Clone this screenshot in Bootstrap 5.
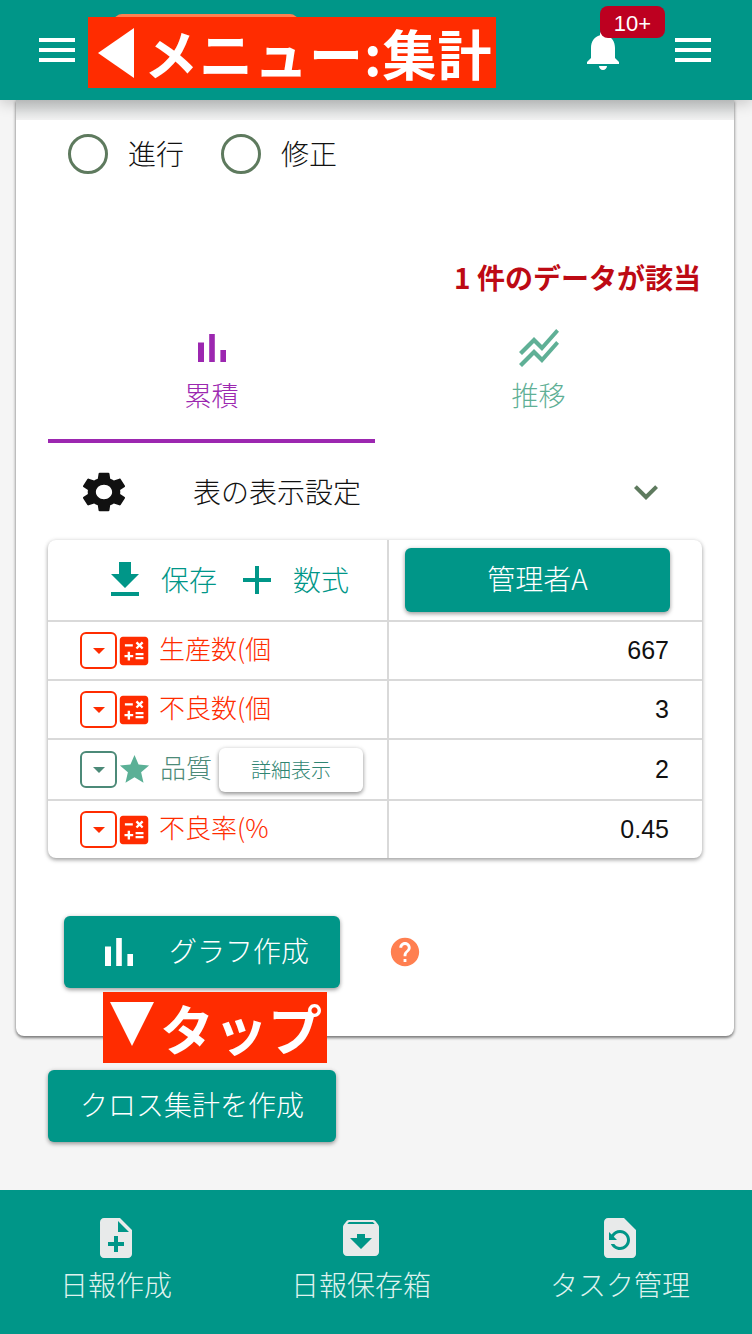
<!DOCTYPE html>
<html lang="ja">
<head>
    <meta charset="UTF-8">
    <meta name="viewport" content="width=device-width, initial-scale=1.0">
    <title>集計</title>
    <link rel="stylesheet" href="https://cdn.jsdelivr.net/npm/bootstrap@5.3.0/dist/css/bootstrap.min.css">
    <style>
        html, body { height: 100%; }
        body {
            width: 752px; height: 1334px; overflow: hidden; position: relative;
            background: #f5f5f5; color: #111;
            font-family: "Noto Sans CJK JP", "Liberation Sans", sans-serif;
            font-size: 28px; font-weight: 300; line-height: 1.2;
        }
        svg { fill: currentColor; flex: none; display: block; }
        .top-bar {
            height: 100px; padding: 0 35px 0 33px; background: #009688; color: #fff;
            position: relative; z-index: 2;
            box-shadow: 0 3px 14px rgba(0,0,0,.2);
        }
        .bell-wrap { position: relative; margin-right: 42px; }
        .bell-badge {
            position: absolute; left: 21px; top: -20px; width: 65px; height: 32px;
            background: #bd0020; border-radius: 8px; color: #fff;
            font: 22px/35px "Liberation Sans", sans-serif; text-align: center;
        }
        .orange-tab {
            position: absolute; left: 114px; top: 14px; width: 184px; height: 10px; z-index: 3;
            background: #ff7f50; border-radius: 8px 8px 0 0;
        }
        .red-label {
            position: absolute; z-index: 4; height: 71px; background: #ff2c00; color: #fff;
            font-size: 54px; font-weight: 700; line-height: 66px; white-space: nowrap;
        }
        .label-menu { left: 88px; top: 17px; width: 408px; padding-left: 10px; }
        .label-menu b { font-weight: 700; margin-left: 10px; letter-spacing: 1px; }
        .label-tap { left: 103px; top: 992px; width: 224px; padding-left: 7px; }
        .label-tap b { font-weight: 700; margin-left: 6px; }
        .tri-left { border-style: solid; border-color: transparent #fff transparent transparent; border-width: 25px 36px 25px 0; flex: none; }
        .tri-down { border-style: solid; border-color: #fff transparent transparent transparent; border-width: 44px 22px 0 22px; flex: none; margin-top: -8px; }

        .main-card {
            margin: 0 18px 0 16px; height: 936px; background: #fff; border-radius: 0 0 8px 8px;
            box-shadow: 0 2px 3px rgba(0,0,0,.45), 0 0 4px rgba(0,0,0,.2);
        }
        .top-fade { height: 20px; background: linear-gradient(#d2d5d5, #d9dbdb 40%, #f1f1f1); }
        .radio-row { padding: 14px 0 0 52px; height: 134px; }
        .radio-row .form-check-input {
            width: 40px; height: 40px; margin: 0 20px 0 0; float: none; border: 3px solid #5e7a5e; flex: none;
        }
        .radio-row label { margin-right: 37px; }
        .hit-count { padding-right: 33px; height: 50px; color: #bd0a14; font-size: 28px; font-weight: 700; text-align: right; line-height: 46px; }
        .mode-tabs { margin: 20px 32px 0; height: 119px; }
        .mode-tab { width: 327px; height: 119px; color: #5fb096; }
        .mode-tab.active-tab { color: #9c27b0; border-bottom: 4px solid #9c27b0; }
        .mode-tab span { margin-top: 7px; font-size: 27px; }
        .setting-row { height: 97px; padding: 0 64px 0 67px; }
        .setting-row .setting-text { margin-left: 68px; flex-grow: 1; }
        .chevron { color: #5e7a5e; }
        .sum-box {
            margin: 0 32px; border-radius: 8px; background: #fff;
            box-shadow: 0 2px 4px rgba(0,0,0,.35), 0 0 5px rgba(0,0,0,.08);
        }
        .sum-table { margin: 0; width: 654px; table-layout: fixed; border-collapse: collapse; --bs-table-bg: transparent; }
        .sum-table td { padding: 0; border: 0; vertical-align: middle; }
        .sum-table tr + tr td { border-top: 2px solid #d9d9d9; }
        .sum-table td:first-child { width: 340px; border-right: 2px solid #d9d9d9; }
        .tr-head { height: 81px; }
        .tr-row { height: 59px; }
        .tr-high { height: 61px; }
        .tr-last { height: 58px; }
        .head-tools { color: #009688; padding-left: 53px; }
        .head-tools span { margin: 0 16px 0 12px; }
        .admin-btn { display: block; width: 265px; height: 64px; margin-left: 16px; padding: 0 0 4px; font-size: 28px; line-height: 1; }
        .teal-btn {
            background: #009688; color: #fff; border: 0; border-radius: 6px; font-weight: 300;
            box-shadow: 0 2px 4px rgba(0,0,0,.35), 0 0 5px rgba(0,0,0,.08);
        }
        .teal-btn:hover { background: #009688; color: #fff; }
        .row-head { padding-left: 32px; color: #ff2c00; font-size: 26px; }
        .row-head span { padding-bottom: 5px; }
        .row-head.star-row { color: #4c8a78; }
        .drop-box {
            width: 37px; height: 37px; border: 2px solid currentColor; border-radius: 6px; flex: none;
            display: flex; align-items: center; justify-content: center;
        }
        .drop-box i { border: 6px solid transparent; border-top-color: currentColor; border-bottom: 0; }
        .row-head svg { margin-left: -2px; margin-right: 6px; }
        .star-row svg { color: #5bb096; margin-left: 0; margin-right: 8px; }
        .row-value { padding-right: 33px !important; text-align: right; font: 25px "Liberation Sans", sans-serif; color: #111; }
        .detail-btn {
            width: 144px; height: 44px; margin-left: 7px; padding: 0; background: #fff; border: 0; border-radius: 6px;
            color: #2f8572; font-size: 20px; font-weight: 300;
            box-shadow: 0 2px 4px rgba(0,0,0,.4), 0 0 5px rgba(0,0,0,.08);
        }
        .graph-row { margin: 58px 0 0 48px; }
        .graph-btn { width: 276px; height: 72px; padding: 0 0 0 31px; font-size: 28px; }
        .graph-btn span { margin-left: 26px; padding-bottom: 4px; }
        .help-icon { color: #ff7f50; margin-left: 48px; }
        .cross-btn { display: block; width: 288px; height: 72px; margin: 34px 0 0 48px; padding: 0 0 4px; font-size: 28px; }
        .bottom-bar {
            position: absolute; left: 0; right: 0; top: 1190px; height: 144px; padding: 24px 62px 0 60px;
            background: #009688; color: #dff2ee;
        }
        .bottom-item svg { color: #e8eaea; }
        .bottom-item span { margin-top: 6px; }
    </style>
</head>
<body>

<!-- header -->
<div class="top-bar d-flex align-items-center justify-content-between">
    <svg width="48" height="48" viewBox="0 0 24 24"><path d="M3 18h18v-2H3v2zm0-5h18v-2H3v2zm0-7v2h18V6H3z"/></svg>
    <div class="d-flex align-items-center">
        <div class="bell-wrap">
            <svg width="48" height="48" viewBox="0 0 24 24"><path d="M12 22c1.1 0 2-.9 2-2h-4c0 1.1.89 2 2 2zm6-6v-5c0-3.07-1.64-5.64-4.5-6.32V4c0-.83-.67-1.5-1.5-1.5s-1.5.67-1.5 1.5v.68C7.63 5.36 6 7.92 6 11v5l-2 2v1h16v-1l-2-2z"/></svg>
            <div class="bell-badge">10+</div>
        </div>
        <svg width="48" height="48" viewBox="0 0 24 24"><path d="M3 18h18v-2H3v2zm0-5h18v-2H3v2zm0-7v2h18V6H3z"/></svg>
    </div>
</div>
<div class="orange-tab"></div>
<div class="red-label label-menu d-flex align-items-center"><i class="tri-left"></i><b>メニュー:集計</b></div>

<!-- main card -->
<div class="main-card">
    <div class="top-fade"></div>

    <div class="radio-row d-flex align-items-start">
        <label class="d-flex align-items-center"><input class="form-check-input" type="radio" name="mode">進行</label>
        <label class="d-flex align-items-center"><input class="form-check-input" type="radio" name="mode">修正</label>
    </div>

    <div class="hit-count">1 件のデータが該当</div>

    <div class="mode-tabs d-flex">
        <div class="mode-tab active-tab d-flex flex-column align-items-center">
            <svg width="48" height="48" viewBox="0 0 24 24"><path d="M5 9.2h3V19H5zM10.6 5h2.8v14h-2.8zm5.6 8H19v6h-2.8z"/></svg>
            <span>累積</span>
        </div>
        <div class="mode-tab d-flex flex-column align-items-center">
            <svg width="48" height="48" viewBox="0 0 24 24"><path d="M2 19.99l7.5-7.51 4 4 7.09-7.97L22 9.92l-8.5 9.56-4-4-6 6.01-1.5-1.5zm1.5-4.5l6-6.01 4 4L22 3.92l-1.41-1.41-7.09 7.97-4-4L2 13.99l1.5 1.5z"/></svg>
            <span>推移</span>
        </div>
    </div>

    <div class="setting-row d-flex align-items-center">
        <svg width="42" height="40" viewBox="2.7 2 18.6 20" preserveAspectRatio="none"><path d="M19.14 12.94c.04-.3.06-.61.06-.94 0-.32-.02-.64-.07-.94l2.03-1.58c.18-.14.23-.41.12-.61l-1.92-3.32c-.12-.22-.37-.29-.59-.22l-2.39.96c-.5-.38-1.03-.7-1.62-.94l-.36-2.54c-.04-.24-.24-.41-.48-.41h-3.84c-.24 0-.43.17-.47.41l-.36 2.54c-.59.24-1.13.57-1.62.94l-2.39-.96c-.22-.08-.47 0-.59.22L2.74 8.87c-.12.21-.08.47.12.61l2.03 1.58c-.05.3-.09.63-.09.94s.02.64.07.94l-2.03 1.58c-.18.14-.23.41-.12.61l1.92 3.32c.12.22.37.29.59.22l2.39-.96c.5.38 1.03.7 1.62.94l.36 2.54c.05.24.24.41.48.41h3.84c.24 0 .44-.17.47-.41l.36-2.54c.59-.24 1.13-.56 1.62-.94l2.39.96c.22.08.47 0 .59-.22l1.92-3.32c.12-.22.07-.47-.12-.61l-2.01-1.58zM12 15.6c-1.98 0-3.6-1.62-3.6-3.6s1.62-3.6 3.6-3.6 3.6 1.62 3.6 3.6-1.62 3.6-3.6 3.6z"/></svg>
        <div class="setting-text">表の表示設定</div>
        <svg class="chevron" width="48" height="48" viewBox="0 0 24 24"><path d="M16.59 8.59L12 13.17 7.41 8.59 6 10l6 6 6-6z"/></svg>
    </div>

    <div class="sum-box">
        <table class="table sum-table">
            <tbody id="sum-body">
                <tr class="tr-head">
                    <td>
                        <div class="head-tools d-flex align-items-center">
                            <svg width="48" height="48" viewBox="0 0 24 24"><path d="M19 9h-4V3H9v6H5l7 7 7-7zM5 18v2h14v-2H5z"/></svg>
                            <span>保存</span>
                            <svg width="48" height="48" viewBox="0 0 24 24"><path d="M19 13h-6v6h-2v-6H5v-2h6V5h2v6h6v2z"/></svg>
                            <span>数式</span>
                        </div>
                    </td>
                    <td><button class="btn teal-btn admin-btn" type="button">管理者A</button></td>
                </tr>
            </tbody>
        </table>
    </div>

    <div class="graph-row d-flex align-items-center">
        <button class="btn teal-btn graph-btn d-flex align-items-center" type="button">
            <svg width="48" height="48" viewBox="0 0 24 24"><path d="M5 9.2h3V19H5zM10.6 5h2.8v14h-2.8zm5.6 8H19v6h-2.8z"/></svg>
            <span>グラフ作成</span>
        </button>
        <svg class="help-icon" width="34" height="34" viewBox="0 0 24 24"><path d="M12 2C6.48 2 2 6.48 2 12s4.48 10 10 10 10-4.48 10-10S17.52 2 12 2zm1 17h-2v-2h2v2zm2.07-7.75l-.9.92C13.45 12.9 13 13.5 13 15h-2v-.5c0-1.1.45-2.1 1.17-2.83l1.24-1.26c.37-.36.59-.86.59-1.41 0-1.1-.9-2-2-2s-2 .9-2 2H8c0-2.21 1.79-4 4-4s4 1.79 4 4c0 .88-.36 1.68-.93 2.25z"/></svg>
    </div>
</div>

<div class="red-label label-tap d-flex align-items-center"><i class="tri-down"></i><b>タップ</b></div>

<button class="btn teal-btn cross-btn" type="button">クロス集計を作成</button>

<!-- bottom nav -->
<div class="bottom-bar d-flex justify-content-between align-items-start">
    <div class="bottom-item d-flex flex-column align-items-center">
        <svg width="48" height="48" viewBox="0 0 24 24"><path d="M14 2H6c-1.1 0-1.99.9-1.99 2L4 20c0 1.1.89 2 1.99 2H18c1.1 0 2-.9 2-2V8l-6-6zm2 14h-3v3h-2v-3H8v-2h3v-3h2v3h3v2zm-3-7V3.5L18.5 9H13z"/></svg>
        <span>日報作成</span>
    </div>
    <div class="bottom-item d-flex flex-column align-items-center">
        <svg width="48" height="48" viewBox="0 0 24 24"><path d="M20.54 5.23l-1.39-1.68C18.88 3.21 18.47 3 18 3H6c-.47 0-.88.21-1.16.55L3.46 5.23C3.17 5.57 3 6.02 3 6.5V19c0 1.1.9 2 2 2h14c1.1 0 2-.9 2-2V6.5c0-.48-.17-.93-.46-1.27zM12 17.5L6.5 12H10v-2h4v2h3.5L12 17.5zM5.12 5l.81-1h12l.94 1H5.12z"/></svg>
        <span>日報保存箱</span>
    </div>
    <div class="bottom-item d-flex flex-column align-items-center">
        <svg width="48" height="48" viewBox="0 0 24 24"><path d="M14 2H6c-1.1 0-1.99.9-1.99 2L4 20c0 1.1.89 2 1.99 2H18c1.1 0 2-.9 2-2V8l-6-6zm-2 16c-2.05 0-3.81-1.24-4.58-3h1.71c.63.9 1.68 1.5 2.87 1.5 1.93 0 3.5-1.57 3.5-3.5S13.93 9.5 12 9.5c-1.35 0-2.52.78-3.1 1.9l1.6 1.6h-4V9l1.3 1.3C8.69 8.92 10.23 8 12 8c2.76 0 5 2.24 5 5s-2.24 5-5 5z"/></svg>
        <span>タスク管理</span>
    </div>
</div>

<script>
    const calcIcon = '<svg width="38" height="38" viewBox="0 0 24 24"><path d="M19 3H5c-1.1 0-2 .9-2 2v14c0 1.1.9 2 2 2h14c1.1 0 2-.9 2-2V5c0-1.1-.9-2-2-2zm-5.97 4.06L14.09 6l1.41 1.41L16.91 6l1.06 1.06-1.41 1.41 1.41 1.41-1.06 1.06-1.41-1.4-1.41 1.41-1.06-1.06 1.41-1.41-1.41-1.42zm-6.78.66h5v1.5h-5v-1.5zM11.5 16h-2v2H8v-2H6v-1.5h2v-2h1.5v2h2V16zm6.5 1.25h-5v-1.5h5v1.5zm0-2.5h-5v-1.5h5v1.5z"/></svg>';
    const starIcon = '<svg width="35" height="35" viewBox="0 0 24 24"><path d="M12 17.27L18.18 21l-1.64-7.03L22 9.24l-7.19-.61L12 2 9.19 8.63 2 9.24l5.46 4.73L5.82 21z"/></svg>';

    const rows = [
        { name: '生産数(個', value: '667', cls: 'tr-row' },
        { name: '不良数(個', value: '3', cls: 'tr-row' },
        { name: '品質', value: '2', cls: 'tr-high', star: true },
        { name: '不良率(%', value: '0.45', cls: 'tr-last' }
    ];

    rows.forEach(r => {
        const detail = r.star ? '<button class="btn detail-btn" type="button">詳細表示</button>' : '';
        document.getElementById('sum-body').innerHTML += `
            <tr class="${r.cls}">
                <td>
                    <div class="row-head d-flex align-items-center ${r.star ? 'star-row' : ''}">
                        <div class="drop-box"><i></i></div>
                        ${r.star ? starIcon : calcIcon}
                        <span>${r.name}</span>${detail}
                    </div>
                </td>
                <td class="row-value">${r.value}</td>
            </tr>`;
    });
</script>
</body>
</html>
